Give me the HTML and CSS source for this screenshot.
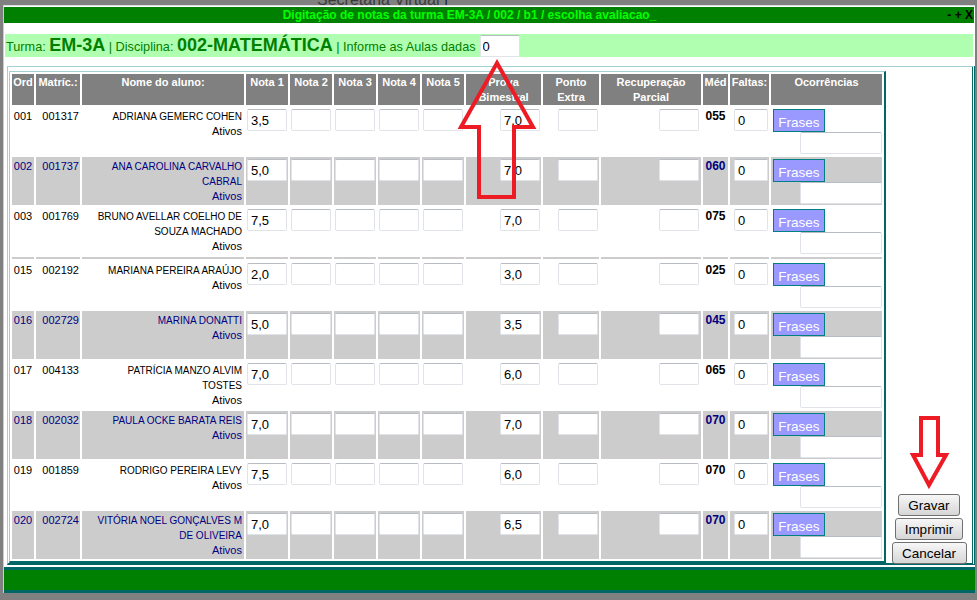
FILE: index.html
```html
<!DOCTYPE html>
<html lang="pt-BR">
<head>
<meta charset="utf-8">
<title>Digitação de notas</title>
<link rel="stylesheet" href="styles.css">
</head>
<body>
<div class="desktop-title">Secretaria Virtual <span class="bar">|</span></div>

<div class="dialog">
  <div class="titlebar">
    <div class="title">Digitação de notas da turma EM-3A / 002 / b1 / escolha avaliacao_</div>
    <div class="controls">- + X</div>
  </div>

  <div class="infobar">
    <span class="info">Turma: <b>EM-3A</b> | Disciplina: <b>002-MATEMÁTICA</b> | Informe as Aulas dadas</span>
    <input class="aulas" value="0">
  </div>

  <div class="panel">
    <table class="grid">
      <colgroup>
        <col class="c-ord"><col class="c-mat"><col class="c-nome">
        <col class="c-nota"><col class="c-nota"><col class="c-nota"><col class="c-nota"><col class="c-nota">
        <col class="c-pb"><col class="c-pe"><col class="c-rp"><col class="c-med"><col class="c-fal"><col class="c-oc">
      </colgroup>
      <thead>
        <tr>
          <th>Ord</th><th>Matríc.:</th><th>Nome do aluno:</th>
          <th>Nota 1</th><th>Nota 2</th><th>Nota 3</th><th>Nota 4</th><th>Nota 5</th>
          <th>Prova Bimestral</th><th>Ponto Extra</th><th>Recuperação Parcial</th>
          <th>Méd</th><th>Faltas:</th><th>Ocorrências</th>
        </tr>
      </thead>
      <tbody>
        <tr>
          <td class="ord">001</td><td class="mat">001317</td>
          <td class="nome">ADRIANA GEMERC COHEN<span class="sit">Ativos</span></td>
          <td class="nota"><input value="3,5"></td><td class="nota"><input></td><td class="nota"><input></td><td class="nota"><input></td><td class="nota"><input></td>
          <td class="pb"><input value="7,0"></td><td class="pe"><input></td><td class="rp"><input></td>
          <td class="med">055</td><td class="fal"><input value="0"></td>
          <td class="oc"><button class="frases">Frases</button><input class="obs"></td>
        </tr>
        <tr class="alt">
          <td class="ord">002</td><td class="mat">001737</td>
          <td class="nome">ANA CAROLINA CARVALHO<br>CABRAL<span class="sit">Ativos</span></td>
          <td class="nota"><input value="5,0"></td><td class="nota"><input></td><td class="nota"><input></td><td class="nota"><input></td><td class="nota"><input></td>
          <td class="pb"><input value="7,0"></td><td class="pe"><input></td><td class="rp"><input></td>
          <td class="med">060</td><td class="fal"><input value="0"></td>
          <td class="oc"><button class="frases">Frases</button><input class="obs"></td>
        </tr>
        <tr>
          <td class="ord">003</td><td class="mat">001769</td>
          <td class="nome">BRUNO AVELLAR COELHO DE<br>SOUZA MACHADO<span class="sit">Ativos</span></td>
          <td class="nota"><input value="7,5"></td><td class="nota"><input></td><td class="nota"><input></td><td class="nota"><input></td><td class="nota"><input></td>
          <td class="pb"><input value="7,0"></td><td class="pe"><input></td><td class="rp"><input></td>
          <td class="med">075</td><td class="fal"><input value="0"></td>
          <td class="oc"><button class="frases">Frases</button><input class="obs"></td>
        </tr>
        <tr class="alt thin">
          <td></td><td></td><td></td><td></td><td></td><td></td><td></td><td></td><td></td><td></td><td></td><td></td><td></td><td></td>
        </tr>
        <tr>
          <td class="ord">015</td><td class="mat">002192</td>
          <td class="nome">MARIANA PEREIRA ARAÚJO<span class="sit">Ativos</span></td>
          <td class="nota"><input value="2,0"></td><td class="nota"><input></td><td class="nota"><input></td><td class="nota"><input></td><td class="nota"><input></td>
          <td class="pb"><input value="3,0"></td><td class="pe"><input></td><td class="rp"><input></td>
          <td class="med">025</td><td class="fal"><input value="0"></td>
          <td class="oc"><button class="frases">Frases</button><input class="obs"></td>
        </tr>
        <tr class="alt">
          <td class="ord">016</td><td class="mat">002729</td>
          <td class="nome">MARINA DONATTI<span class="sit">Ativos</span></td>
          <td class="nota"><input value="5,0"></td><td class="nota"><input></td><td class="nota"><input></td><td class="nota"><input></td><td class="nota"><input></td>
          <td class="pb"><input value="3,5"></td><td class="pe"><input></td><td class="rp"><input></td>
          <td class="med">045</td><td class="fal"><input value="0"></td>
          <td class="oc"><button class="frases">Frases</button><input class="obs"></td>
        </tr>
        <tr>
          <td class="ord">017</td><td class="mat">004133</td>
          <td class="nome">PATRÍCIA MANZO ALVIM<br>TOSTES<span class="sit">Ativos</span></td>
          <td class="nota"><input value="7,0"></td><td class="nota"><input></td><td class="nota"><input></td><td class="nota"><input></td><td class="nota"><input></td>
          <td class="pb"><input value="6,0"></td><td class="pe"><input></td><td class="rp"><input></td>
          <td class="med">065</td><td class="fal"><input value="0"></td>
          <td class="oc"><button class="frases">Frases</button><input class="obs"></td>
        </tr>
        <tr class="alt">
          <td class="ord">018</td><td class="mat">002032</td>
          <td class="nome">PAULA OCKE BARATA REIS<span class="sit">Ativos</span></td>
          <td class="nota"><input value="7,0"></td><td class="nota"><input></td><td class="nota"><input></td><td class="nota"><input></td><td class="nota"><input></td>
          <td class="pb"><input value="7,0"></td><td class="pe"><input></td><td class="rp"><input></td>
          <td class="med">070</td><td class="fal"><input value="0"></td>
          <td class="oc"><button class="frases">Frases</button><input class="obs"></td>
        </tr>
        <tr>
          <td class="ord">019</td><td class="mat">001859</td>
          <td class="nome">RODRIGO PEREIRA LEVY<span class="sit">Ativos</span></td>
          <td class="nota"><input value="7,5"></td><td class="nota"><input></td><td class="nota"><input></td><td class="nota"><input></td><td class="nota"><input></td>
          <td class="pb"><input value="6,0"></td><td class="pe"><input></td><td class="rp"><input></td>
          <td class="med">070</td><td class="fal"><input value="0"></td>
          <td class="oc"><button class="frases">Frases</button><input class="obs"></td>
        </tr>
        <tr class="alt">
          <td class="ord">020</td><td class="mat">002724</td>
          <td class="nome">VITÓRIA NOEL GONÇALVES M<br>DE OLIVEIRA<span class="sit">Ativos</span></td>
          <td class="nota"><input value="7,0"></td><td class="nota"><input></td><td class="nota"><input></td><td class="nota"><input></td><td class="nota"><input></td>
          <td class="pb"><input value="6,5"></td><td class="pe"><input></td><td class="rp"><input></td>
          <td class="med">070</td><td class="fal"><input value="0"></td>
          <td class="oc"><button class="frases">Frases</button><input class="obs"></td>
        </tr>
      </tbody>
    </table>

    <div class="actions">
      <button class="btn btn-gravar">Gravar</button>
      <button class="btn btn-imprimir">Imprimir</button>
      <button class="btn btn-cancelar">Cancelar</button>
    </div>
  </div>

  <div class="statusbar"></div>
</div>

<svg class="annot" width="977" height="600" viewBox="0 0 977 600">
  <polygon points="497,63 533,127 514,127 514,197 479,197 479,127 461,127" />
  <polygon points="921,418 938,418 938,455 946,455 929,485 913,455 921,455" />
</svg>
</body>
</html>
```

FILE: styles.css
```css
* { box-sizing: border-box; }

html, body {
  margin: 0;
  padding: 0;
}

body {
  width: 977px;
  height: 600px;
  overflow: hidden;
  position: relative;
  background: #808080;
  font-family: "Liberation Sans", Arial, sans-serif;
}

.desktop-title {
  position: absolute;
  left: 317px;
  top: -8px;
  font-size: 16px;
  line-height: 16px;
  color: #3a3a3a;
  white-space: nowrap;
}

.desktop-title .bar { color: #222; }

/* dialog window */
.dialog {
  position: absolute;
  left: 3px;
  top: 5px;
  width: 972px;
  height: 588px;
  background: #fff;
  border-top: 1px solid #d4dede;
  border-left: 1px solid #c4d0d0;
  padding-top: 1px;
  display: flex;
  flex-direction: column;
}

.titlebar {
  height: 16px;
  margin-right: 1px;
  background: #008000;
  display: flex;
  align-items: center;
}

.title {
  flex: 1;
  text-align: center;
  color: #00ff00;
  font-weight: bold;
  font-size: 12px;
  line-height: 16px;
  white-space: nowrap;
}

.controls {
  width: 39px;
  text-align: right;
  padding-right: 1px;
  color: #000;
  font-weight: bold;
  font-size: 12px;
  line-height: 16px;
  white-space: pre;
}

.infobar {
  margin: 11px 2px 0 1px;
  height: 23px;
  background: #b0ffb0;
  display: flex;
  align-items: flex-end;
  padding-left: 1px;
}

.info {
  color: #008000;
  font-size: 12.7px;
  white-space: nowrap;
  align-self: center;
  line-height: 22px;
}

.info b {
  font-size: 18px;
  font-weight: bold;
}

.aulas {
  width: 40px;
  height: 22px;
  margin-left: 4px;
  border: 1px solid #e0e3e8;
  border-top-color: #b8bcc4;
  border-radius: 2px;
  background: #fff;
  font: 13px "Liberation Sans", Arial, sans-serif;
  padding: 0 2px;
  color: #000;
}

/* main panel */
.panel {
  margin: 9px 0 0 3px;
  border-top: 1px solid #a2d0d0;
  border-left: 1px solid #a2d0d0;
  border-right: 3px double #006666;
  border-bottom: 2px solid #006666;
  padding: 4px 0 0 1px;
  display: flex;
  align-items: flex-start;
}

.grid {
  width: 877px;
  table-layout: fixed;
  border-collapse: separate;
  border-spacing: 2px;
  border-style: solid;
  border-width: 1px 2px 2px 1px;
  border-color: #a2d0d0 #006666 #006666 #a2d0d0;
  flex: none;
}

.c-ord { width: 22px; }
.c-mat { width: 44px; }
.c-nome { width: 162px; }
.c-nota { width: 42px; }
.c-pb { width: 75px; }
.c-pe { width: 56px; }
.c-rp { width: 100px; }
.c-med { width: 25px; }
.c-fal { width: 39px; }
.c-oc { width: 111px; }

.grid th {
  height: 31px;
  background: #808080;
  color: #fff;
  font-weight: bold;
  font-size: 11px;
  line-height: 15px;
  padding: 1px 0 0;
  vertical-align: top;
  text-align: center;
}

.grid tbody tr { height: 48px; }
.grid tbody tr.thin { height: 2px; }

.grid td {
  padding: 2px 0 0;
  vertical-align: top;
  font-size: 11px;
  line-height: 15px;
  color: #000;
}

.grid tr.thin td { padding: 0; height: 2px; }

.grid tr.alt td {
  background: #cccccc;
  color: #000080;
}

.ord { text-align: center; }
.mat { text-align: right; padding-right: 1px !important; }

.grid td.nome {
  text-align: right;
  padding-right: 2px;
  font-size: 10px;
}

.sit {
  display: block;
  font-size: 11px;
}

.grid td.med {
  text-align: center;
  font-weight: bold;
  font-size: 12px;
}

.grid td input {
  display: block;
  width: 40px;
  height: 22px;
  border: 1px solid #e0e3e8;
  border-top-color: #b8bcc4;
  border-radius: 2px;
  background: #fff;
  font: 13px "Liberation Sans", Arial, sans-serif;
  color: #000;
  padding: 0 3px;
  margin: 0;
}

.nota input { margin-left: 1px !important; }
.pb input { margin: 0 1px 0 auto !important; }
.pe input { margin: 0 1px 0 auto !important; }
.rp input { margin: 0 2px 0 auto !important; }
.grid td.fal input { width: 34px; margin: 0 1px 0 auto; }

.frases {
  display: block;
  width: 52px;
  height: 23px;
  margin-left: 2px;
  background: #9999ff;
  border: 1px solid #008080;
  color: #fff;
  font: 13.5px "Liberation Sans", Arial, sans-serif;
  padding: 3px 0 0;
  text-align: center;
}

.grid td input.obs {
  width: 82px;
  margin: 0 0 0 auto;
}

/* actions column */
.actions {
  flex: 1;
  align-self: stretch;
  display: flex;
  flex-direction: column;
  justify-content: flex-end;
  align-items: center;
  gap: 2px;
  margin-bottom: -1px;
}

.btn {
  height: 22px;
  padding: 0;
  border: 1px solid #707070;
  border-radius: 3px;
  background: linear-gradient(#f7f7f7, #e6e6e6 50%, #d6d6d6);
  font: 13.5px "Liberation Sans", Arial, sans-serif;
  color: #000;
  text-align: center;
}

.btn-gravar { width: 62px; }
.btn-imprimir { width: 68px; }
.btn-cancelar { width: 75px; }

.statusbar {
  margin-top: 2px;
  height: 26px;
  background: #008000;
  border-top: 3px solid #006666;
  border-bottom: 3px solid #006666;
}

/* annotation arrows */
.annot {
  position: absolute;
  left: 0;
  top: 0;
  pointer-events: none;
}

.annot polygon {
  fill: none;
  stroke: #ed1c24;
  stroke-width: 4;
  stroke-linejoin: miter;
}
```
